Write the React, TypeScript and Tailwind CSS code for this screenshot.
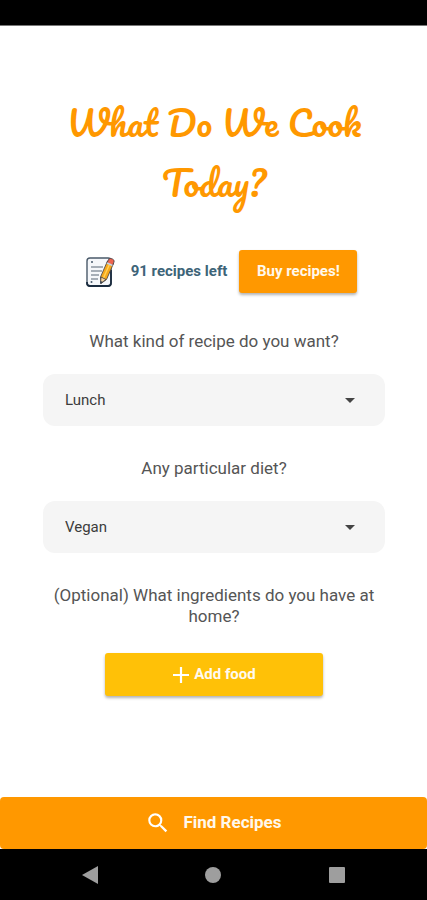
import { useState } from "react";

function NotepadIcon() {
  return (
    <svg viewBox="0 0 30 32" className="h-8 w-[30px] shrink-0" aria-hidden="true">
      <rect x="2" y="2" width="24" height="28" rx="3" fill="#f5f7fa" stroke="#4a5a6a" strokeWidth="1.4" />
      <path d="M2 26v1a3 3 0 0 0 3 3h18a3 3 0 0 0 3-3V14" fill="none" stroke="#1b2c3f" strokeWidth="1.8" />
      <circle cx="7" cy="6" r="1" fill="#44576a" />
      <circle cx="6.5" cy="26" r="1" fill="#44576a" />
      <path d="M6 11h12M6 15h11M6 19h8M6 23h7" stroke="#8c96a1" strokeWidth="1.3" />
      <path d="M15.5 21 22.5 5l6 2.500-7 16-5.500 4z" fill="#f8a91c" stroke="#3a3b42" strokeWidth="0.8" strokeLinejoin="round" />
      <path d="m18.500 22 7-16" stroke="#ffd25a" strokeWidth="1.4" />
      <path d="m22 7 1.500-3.500Q25 1.500 27.500 3t1.500 3l-1.500 3.500z" fill="#ef6550" stroke="#3a3b42" strokeWidth="0.8" />
      <path d="m22 7 5.500 2.500" stroke="#cbd5dc" strokeWidth="1.6" />
      <path d="m16 21-.5 6.500L21 23.500z" fill="#f6d3a1" stroke="#3a3b42" strokeWidth="0.8" />
      <path d="m15.700 25-.2 2.500 2-1.500z" fill="#24384d" />
    </svg>
  );
}

type ChoiceProps = { id: string; label: string; options: string[] };

function Choice({ id, label, options }: ChoiceProps) {
  const [value, setValue] = useState(options[0]);
  return (
    <div className="flex flex-col gap-[22px]">
      <label htmlFor={id} className="text-center text-[17px] leading-[21px] text-[#555555]">
        {label}
      </label>
      <div className="grid items-center">
        <select
          id={id}
          value={value}
          onChange={(e) => setValue(e.target.value)}
          className="col-start-1 row-start-1 h-[52px] w-full appearance-none rounded-xl bg-[#f5f5f5] px-[22px] text-[15px] text-[#3c3c3c]"
        >
          {options.map((option) => (
            <option key={option}>{option}</option>
          ))}
        </select>
        <svg viewBox="0 0 10 5" className="pointer-events-none col-start-1 row-start-1 mr-[30px] h-[5px] w-[10px] justify-self-end" aria-hidden="true">
          <path d="M0 0h10L5 5z" fill="#444444" />
        </svg>
      </div>
    </div>
  );
}

export default function App() {
  return (
    <div className="flex min-h-screen flex-col bg-white font-['Roboto',sans-serif]">
      <div className="h-[26px] border-b border-[#777777] bg-black" />

      <main className="flex flex-1 flex-col pr-[42px] pl-[43px] pt-[66px] pb-8">
        <h1 className="text-center font-['Pacifico',cursive] text-[35px] leading-[60px] font-normal text-[#ff9800]">
          What Do We Cook Today?
        </h1>

        <div className="mt-[38px] flex items-center justify-center pl-[14px]">
          <NotepadIcon />
          <p className="ml-4 text-[15px] font-bold text-[#3d6478]">91 recipes left</p>
          <button type="button" className="ml-3 h-[43px] w-[118px] rounded-[3px] bg-[#ff9800] text-[15px] font-bold text-[#fff8ec] shadow-[0_2px_3px_rgba(0,0,0,0.3)]">
            Buy recipes!
          </button>
        </div>

        <div className="mt-[38px] flex flex-col gap-8">
          <Choice id="meal" label="What kind of recipe do you want?" options={["Lunch", "Breakfast", "Dinner"]} />
          <Choice id="diet" label="Any particular diet?" options={["Vegan", "Vegetarian", "None"]} />
          <p className="text-center text-[17px] leading-[21px] text-[#555555]">
            (Optional) What ingredients do you have at home?
          </p>
        </div>

        <button type="button" className="mt-[26px] flex h-[43px] w-[218px] items-center justify-center gap-1 self-center rounded-[3px] bg-[#ffc107] text-[15px] font-bold text-[#fffaf0] shadow-[0_2px_3px_rgba(0,0,0,0.3)]">
          <svg viewBox="0 0 18 18" className="size-[18px]" aria-hidden="true">
            <path d="M9 1v16M1 9h16" stroke="white" strokeWidth="2.2" />
          </svg>
          Add food
        </button>
      </main>

      <footer>
        <button type="button" className="flex h-[52px] w-full items-center justify-center gap-3 rounded-[4px] bg-[#ff9800] text-[17px] font-bold text-[#fff8ec]">
          <svg viewBox="0 0 24 24" className="size-[26px]" fill="white" aria-hidden="true">
            <path d="M15.500 14h-.79l-.28-.27A6.470 6.470 0 0 0 16 9.500 6.500 6.500 0 1 0 9.500 16c1.610 0 3.090-.59 4.230-1.570l.27.28v.79l5 4.990L20.490 19l-4.990-5zm-6 0C7.010 14 5 11.990 5 9.500S7.010 5 9.500 5 14 7.010 14 9.500 11.990 14 9.500 14z" />
          </svg>
          Find Recipes
        </button>
        <nav aria-label="System" className="flex h-[51px] items-center justify-around bg-black px-7">
          <button type="button" aria-label="Back">
            <svg viewBox="0 0 18 18" className="size-[18px]" fill="#9e9e9e"><path d="M17 0v18L1 9z" /></svg>
          </button>
          <button type="button" aria-label="Home">
            <svg viewBox="0 0 18 18" className="size-[18px]" fill="#9e9e9e"><circle cx="9" cy="9" r="8" /></svg>
          </button>
          <button type="button" aria-label="Recent apps">
            <svg viewBox="0 0 18 18" className="size-[18px]" fill="#9e9e9e"><rect x="1" y="1" width="16" height="16" rx="1" /></svg>
          </button>
        </nav>
      </footer>
    </div>
  );
}
